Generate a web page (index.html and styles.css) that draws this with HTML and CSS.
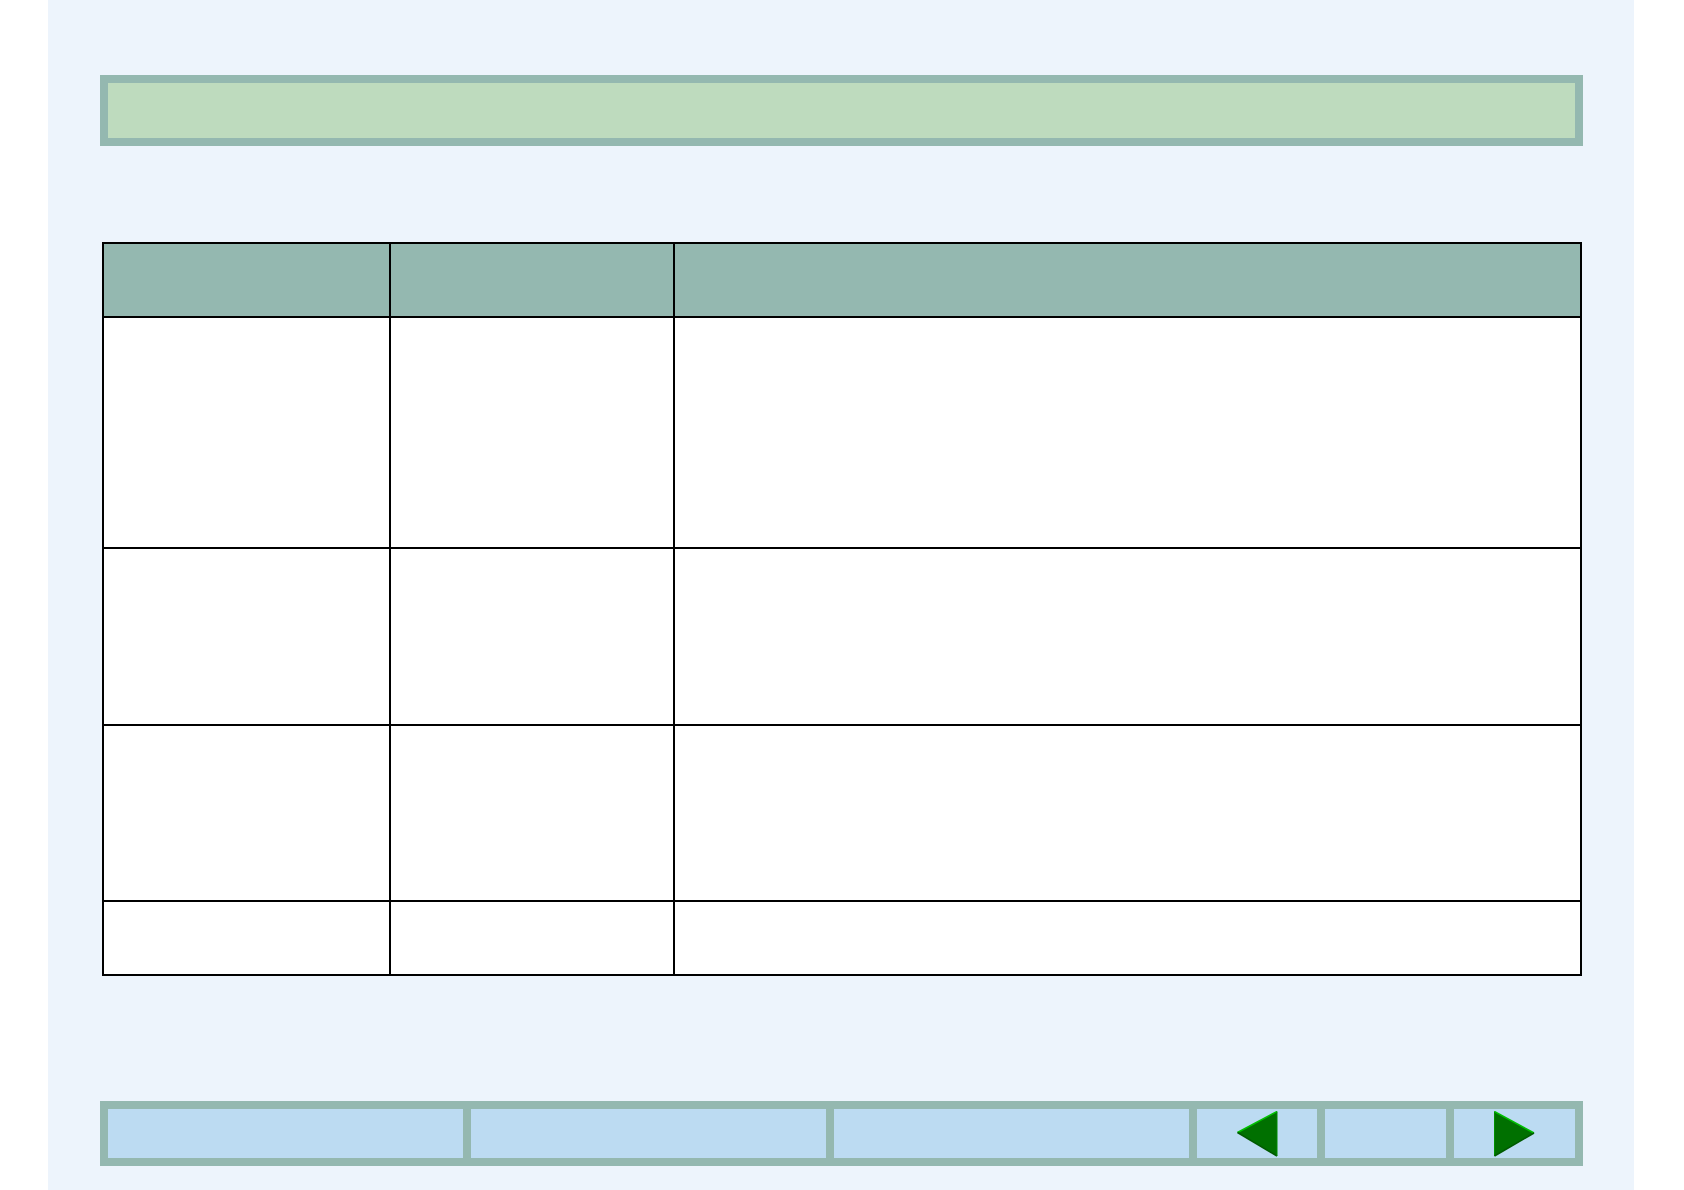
FILE: index.html
```html
<!DOCTYPE html>
<html lang="en">
<head>
    <meta charset="UTF-8">
    <meta name="viewport" content="width=device-width, initial-scale=1.0">
    <title>Page</title>
    <link rel="stylesheet" href="styles.css">
</head>
<body>
    <div class="page">
        <div class="title-bar"></div>

        <table class="info-table">
            <tr class="head-row">
                <th class="col-a"></th>
                <th class="col-b"></th>
                <th class="col-c"></th>
            </tr>
            <tr class="row-tall"><td></td><td></td><td></td></tr>
            <tr class="row-mid"><td></td><td></td><td></td></tr>
            <tr class="row-mid2"><td></td><td></td><td></td></tr>
            <tr class="row-short"><td></td><td></td><td></td></tr>
        </table>

        <div class="nav-bar">
            <div class="nav-cell"></div>
            <div class="nav-cell"></div>
            <div class="nav-cell"></div>
            <div class="nav-cell arrow-cell">
                <svg width="41" height="46" viewBox="0 0 41 46">
                    <polygon points="0.5,21.5 40,0.5 40,45" fill="#007000"/>
                    <line x1="0.5" y1="21.5" x2="40" y2="0.5" stroke="#00c000" stroke-width="1.5"/>
                    <line x1="0.5" y1="21.5" x2="40" y2="45" stroke="#005a00" stroke-width="1.5"/>
                    <line x1="40" y1="0.5" x2="40" y2="45" stroke="#008a00" stroke-width="1"/>
                </svg>
            </div>
            <div class="nav-cell"></div>
            <div class="nav-cell arrow-cell">
                <svg width="41" height="46" viewBox="0 0 41 46">
                    <polygon points="0.5,0.5 40,22 0.5,45" fill="#007000"/>
                    <line x1="0.5" y1="0.5" x2="40" y2="22" stroke="#00c000" stroke-width="1.5"/>
                    <line x1="0.5" y1="0.5" x2="0.5" y2="45" stroke="#009000" stroke-width="1"/>
                    <line x1="40" y1="22" x2="0.5" y2="45" stroke="#005a00" stroke-width="1.5"/>
                </svg>
            </div>
        </div>
    </div>
</body>
</html>
```

FILE: styles.css
```css
body {
    margin: 0;
    background-color: #ffffff;
    font-family: "Liberation Sans", Arial, sans-serif;
}
.page {
    margin-left: 48px;
    width: 1586px;
    min-height: 1190px;
    box-sizing: border-box;
    padding: 75px 0 0 52px;
    background-color: #edf4fc;
}
.title-bar {
    width: 1483px;
    height: 71px;
    box-sizing: border-box;
    border: 8px solid #94b8b0;
    background-color: #bedbbe;
}
.info-table {
    margin: 96px 0 0 2px;
    border-collapse: separate;
    border-spacing: 0;
    border-top: 2px solid #000;
    border-left: 2px solid #000;
    background-color: #ffffff;
    table-layout: fixed;
}
.info-table th,
.info-table td {
    padding: 0;
    border-right: 2px solid #000;
    border-bottom: 2px solid #000;
}
.info-table th {
    background-color: #94b8b0;
}
.col-a {
    width: 285px;
}
.col-b {
    width: 282px;
}
.col-c {
    width: 905px;
}
.head-row {
    height: 74px;
}
.row-tall {
    height: 231px;
}
.row-mid {
    height: 177px;
}
.row-mid2 {
    height: 176px;
}
.row-short {
    height: 74px;
}
.nav-bar {
    margin-top: 125px;
    width: 1483px;
    box-sizing: border-box;
    padding: 8px;
    display: grid;
    grid-template-columns: 355px 355px 355px 120px 121px 121px;
    column-gap: 8px;
    background-color: #94b8b0;
}
.nav-cell {
    height: 49px;
    background-color: #bcdbf2;
}
.arrow-cell {
    display: flex;
    align-items: center;
    justify-content: center;
}
.arrow-cell svg {
    display: block;
}
```
